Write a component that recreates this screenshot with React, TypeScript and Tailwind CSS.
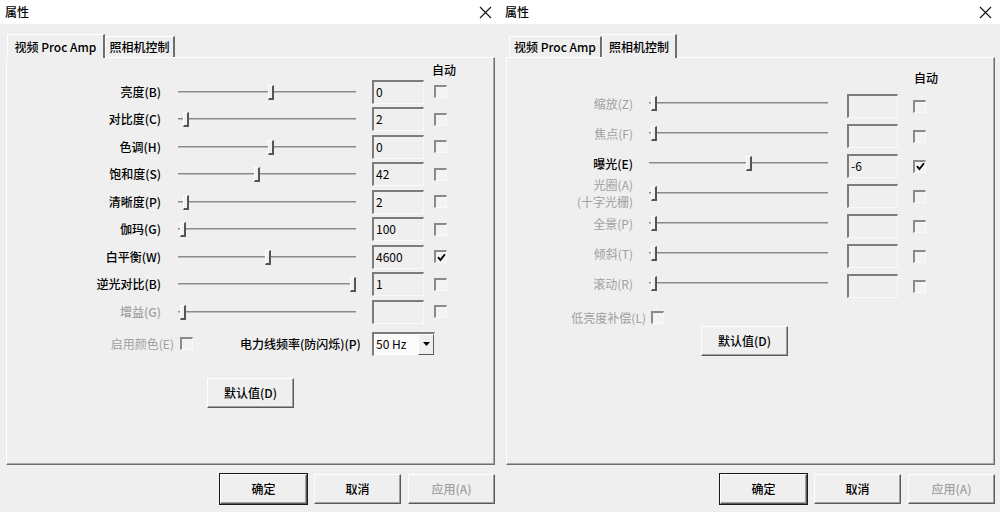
import React from 'react';

const FONT = "font-['Noto_Sans_CJK_SC','Liberation_Sans',sans-serif]";

interface SliderProps {
  pos: number;
  className: string;
}

const Slider: React.FC<SliderProps> = ({ pos, className }) => (
  <div className={`relative h-[24px] shrink-0 ${className}`}>
    <div className="absolute left-0 right-0 top-[11px] h-[2px] bg-[#8a8a8a] border-b border-b-[#bdbdbd]" />
    <div
      className="absolute top-[5px] h-[15px] w-[6px] bg-[#f0f0f0] border-l border-t border-l-white border-t-white border-r-2 border-b-2 border-r-[#555] border-b-[#555]"
      style={{ left: pos }}
    />
  </div>
);

const TextBox: React.FC<{ value?: string; className?: string }> = ({ value, className = '' }) => (
  <div
    className={`h-[24px] shrink-0 bg-[#efefef] border-t-2 border-l-2 border-t-[#7c7c7c] border-l-[#7c7c7c] border-r border-b border-r-[#f9f9f9] border-b-[#f9f9f9] pl-[2px] text-[12px] leading-[20px] text-black ${className}`}
  >
    {value}
  </div>
);

const Check: React.FC<{ checked?: boolean; className?: string }> = ({ checked, className = '' }) => (
  <div
    className={`w-[13px] h-[13px] shrink-0 bg-[#f3f3f3] border-t-2 border-l-2 border-t-[#8a8a8a] border-l-[#8a8a8a] border-r border-b border-r-[#fafafa] border-b-[#fafafa] flex items-center justify-center ${className}`}
  >
    {checked && (
      <svg width="9" height="9" viewBox="0 0 9 9">
        <path d="M1 4.2 L3.4 7 L8 1.2" stroke="#000" strokeWidth="1.8" fill="none" />
      </svg>
    )}
  </div>
);

interface BtnProps {
  label: string;
  primary?: boolean;
  disabled?: boolean;
  className?: string;
}

const Btn: React.FC<BtnProps> = ({ label, primary, disabled, className = '' }) => (
  <button
    className={`h-[30px] w-[87px] bg-[#efefef] border border-t-white border-l-white border-r-[#5a5a5a] border-b-[#5a5a5a] shadow-[inset_-1px_-1px_0_#a0a0a0] text-[12px] font-medium ${
      primary ? 'ring-1 ring-[#1a1a1a]' : ''
    } ${disabled ? 'text-[#a0a0a0]' : 'text-black'} ${className}`}
  >
    {label}
  </button>
);

interface TabDef {
  label: string;
  w: string;
  active?: boolean;
}

const Tab: React.FC<TabDef> = ({ label, w, active }) => (
  <div
    className={`${w} flex items-center justify-center text-[12px] font-medium text-black bg-[#efefef] border-l border-t border-l-white border-t-white border-r-2 border-r-[#6e6e6e] ${
      active ? 'h-[24px] -mb-[1px] relative z-10' : 'h-[21px]'
    }`}
  >
    {label}
  </div>
);

interface DialogProps {
  tabs: TabDef[];
  tabOffset: string;
  children: React.ReactNode;
}

const Dialog: React.FC<DialogProps> = ({ tabs, tabOffset, children }) => (
  <div className={`w-[500px] h-[512px] flex flex-col bg-[#efefef] ${FONT}`}>
    <div className="h-[24px] bg-white flex items-center justify-between pl-[5px] pr-[8px]">
      <span className="text-[12px] font-medium text-black">属性</span>
      <svg width="13" height="13" viewBox="0 0 13 13">
        <path d="M1 1 L12 12 M12 1 L1 12" stroke="#111" strokeWidth="1.1" />
      </svg>
    </div>
    <div className="flex flex-col pt-[10px] pl-[6px] pr-[5px]">
      <div className={`flex items-end h-[23px] ${tabOffset}`}>
        {tabs.map((t) => (
          <Tab key={t.label} {...t} />
        ))}
      </div>
      <div className="h-[408px] border border-t-white border-l-white border-r-[#6e6e6e] border-b-[#6e6e6e] shadow-[inset_-1px_-1px_0_#a9a9a9] flex flex-col">
        {children}
      </div>
      <div className="flex justify-end gap-[7px] mt-[9px]">
        <Btn label="确定" primary />
        <Btn label="取消" />
        <Btn label="应用(A)" disabled />
      </div>
    </div>
  </div>
);

const procRows = [
  { label: '亮度(B)', value: '0', pos: 90 },
  { label: '对比度(C)', value: '2', pos: 5 },
  { label: '色调(H)', value: '0', pos: 90 },
  { label: '饱和度(S)', value: '42', pos: 76 },
  { label: '清晰度(P)', value: '2', pos: 5 },
  { label: '伽玛(G)', value: '100', pos: 2 },
  { label: '白平衡(W)', value: '4600', pos: 87, auto: true },
  { label: '逆光对比(B)', value: '1', pos: 172 },
  { label: '增益(G)', value: '', pos: 2, disabled: true },
];

const camRows = [
  { label: ['缩放(Z)'], value: '', pos: 2, disabled: true },
  { label: ['焦点(F)'], value: '', pos: 2, disabled: true },
  { label: ['曝光(E)'], value: '-6', pos: 97, auto: true },
  { label: ['光圈(A)', '(十字光栅)'], value: '', pos: 2, disabled: true },
  { label: ['全景(P)'], value: '', pos: 2, disabled: true },
  { label: ['倾斜(T)'], value: '', pos: 2, disabled: true },
  { label: ['滚动(R)'], value: '', pos: 2, disabled: true },
];

const ProcAmpPanel = () => (
  <div className="flex flex-col pt-[4px]">
    <div className="h-[16px] flex items-center pl-[425px] text-[12px] font-medium text-black">自动</div>
    {procRows.map((r) => (
      <div key={r.label} className="h-[27.5px] flex items-center">
        <div
          className={`w-[154px] text-right text-[12px] font-medium whitespace-nowrap ${
            r.disabled ? 'text-[#a0a0a0]' : 'text-black'
          }`}
        >
          {r.label}
        </div>
        <Slider pos={r.pos} className="ml-[17px] w-[178px]" />
        <TextBox value={r.value} className="ml-[16px] w-[52px]" />
        <Check checked={r.auto} className="ml-[10px]" />
      </div>
    ))}
    <div className="h-[24px] mt-[6px] flex items-center">
      <div className="w-[167px] text-right text-[12px] text-[#a0a0a0] whitespace-nowrap">启用颜色(E)</div>
      <Check className="ml-[6px]" />
      <div className="ml-[47px] w-[120px] text-[12px] font-medium text-black whitespace-nowrap">电力线频率(防闪烁)(P)</div>
      <div className="ml-[12px] w-[63px] h-[24px] flex bg-[#fbfbfb] border-t-2 border-l-2 border-t-[#7c7c7c] border-l-[#7c7c7c] border-r border-b border-r-[#f0f0f0] border-b-[#f0f0f0]">
        <span className="flex-1 pl-[2px] text-[12px] leading-[20px] text-black">50 Hz</span>
        <div className="w-[16px] bg-[#efefef] border border-t-white border-l-white border-r-[#5a5a5a] border-b-[#5a5a5a] flex items-center justify-center">
          <svg width="7" height="4" viewBox="0 0 7 4">
            <path d="M0 0 H7 L3.5 4 Z" fill="#000" />
          </svg>
        </div>
      </div>
    </div>
    <Btn label="默认值(D)" className="ml-[200px] mt-[22px] h-[29px]" />
  </div>
);

const CameraPanel = () => (
  <div className="flex flex-col pt-[12px]">
    <div className="h-[16px] mb-[2px] flex items-center pl-[407px] text-[12px] font-medium text-black">自动</div>
    {camRows.map((r) => (
      <div key={r.label[0]} className="h-[30px] flex items-center">
        <div
          className={`w-[126px] flex flex-col items-end text-[12px] leading-[17px] whitespace-nowrap ${
            r.disabled ? 'text-[#a0a0a0]' : 'text-black font-medium'
          }`}
        >
          {r.label.map((l) => (
            <span key={l}>{l}</span>
          ))}
        </div>
        <Slider pos={r.pos} className="ml-[16px] w-[179px]" />
        <TextBox value={r.value} className="ml-[19px] w-[51px] mt-[6px]" />
        <Check checked={r.auto} className="ml-[15px] mt-[6px]" />
      </div>
    ))}
    <div className="h-[17px] mt-[11px] flex items-center">
      <div className="w-[139px] text-right text-[12px] text-[#a0a0a0] whitespace-nowrap">低亮度补偿(L)</div>
      <Check className="ml-[5px]" />
    </div>
    <Btn label="默认值(D)" className="ml-[194px] h-[26px]" />
  </div>
);

export default function App() {
  return (
    <div className="w-[1000px] h-[512px] flex bg-[#efefef] overflow-hidden">
      <Dialog
        tabOffset="pl-[1px]"
        tabs={[
          { label: '视频 Proc Amp', w: 'w-[98px]', active: true },
          { label: '照相机控制', w: 'w-[70px]' },
        ]}
      >
        <ProcAmpPanel />
      </Dialog>
      <Dialog
        tabOffset="pl-[3px]"
        tabs={[
          { label: '视频 Proc Amp', w: 'w-[93px]' },
          { label: '照相机控制', w: 'w-[75px]', active: true },
        ]}
      >
        <CameraPanel />
      </Dialog>
    </div>
  );
}
